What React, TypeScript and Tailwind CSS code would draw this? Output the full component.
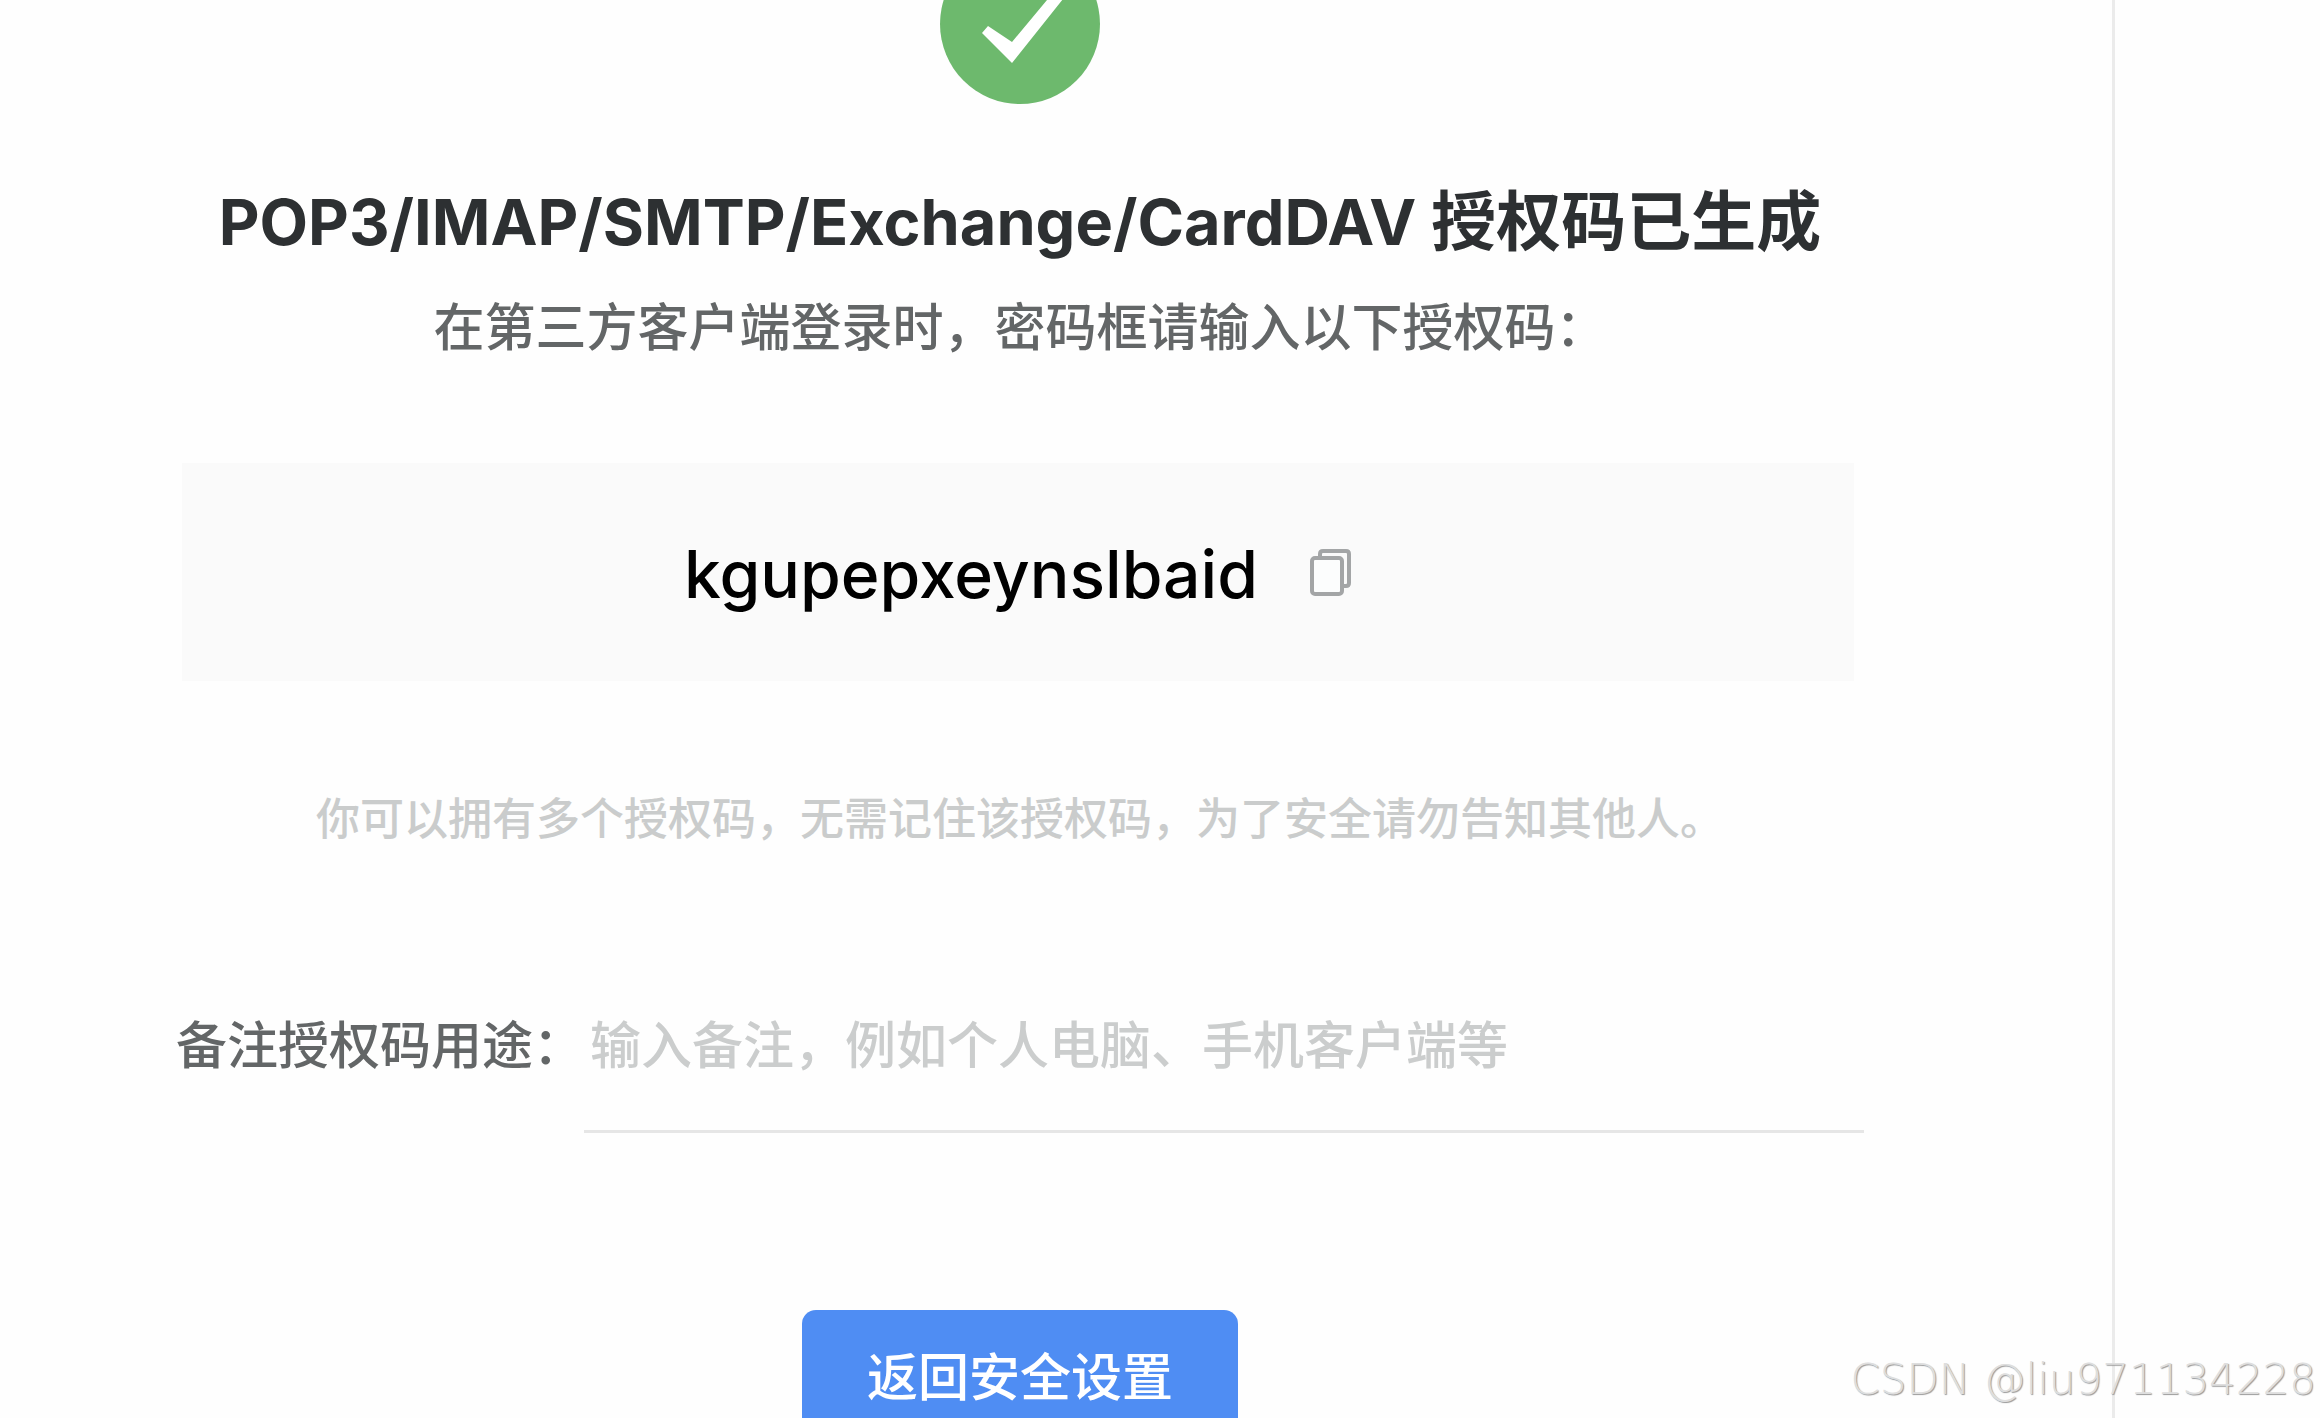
const cjk = 'font-["Noto_Sans_CJK_SC",sans-serif]';
const latin = 'font-[Inter,"Noto_Sans_CJK_SC",sans-serif]';

function SuccessMark() {
  return (
    <svg viewBox="0 0 160 160" className="block size-40" role="img" aria-label="成功">
      <circle cx="80" cy="80" r="80" fill="#6db96d" />
      <path d="M42 89 L48 82 L72 98 L112 50 L127 50 L72 119 Z" fill="#fff" />
    </svg>
  );
}

function CopyIcon() {
  return (
    <svg viewBox="0 0 42 48" className="block h-12 w-[42px]" fill="none" stroke="#a3a5a6" strokeWidth="4" strokeLinejoin="round">
      <path d="M10 9 V6 Q10 3 13 3 H36 Q39 3 39 6 V35 Q39 38 36 38 H33" />
      <rect x="2" y="10" width="30" height="36" rx="3" fill="#fcfdfd" />
    </svg>
  );
}

export default function App() {
  return (
    <div className={`relative flex h-screen overflow-hidden bg-[#fefefe] text-[51px] leading-[72px] font-medium text-[#636667] ${cjk}`}>
      <main className="flex flex-1 flex-col items-center border-r-3 border-[#ebebeb] pr-[248px] pl-44">
        <div className="-mt-14 shrink-0">
          <SuccessMark />
        </div>
        <h1 className={`mt-[70px] h-24 whitespace-nowrap text-[63px] leading-24 font-bold text-[#2d3032] ${latin}`}>
          POP3/IMAP/SMTP/Exchange/CardDAV <span className="text-[65px]">授权码已生成</span>
        </h1>
        <p className="mt-[18px] whitespace-nowrap">在第三方客户端登录时，密码框请输入以下授权码：</p>

        <div className="mt-[103px] flex w-full pr-2.5 pl-1.5">
          <div className="flex h-[218px] flex-1 items-center justify-center gap-[52px] bg-[#fafafa]">
            <span className={`pt-1 text-[66px] text-black ${latin}`}>kgupepxeynslbaid</span>
            <button type="button" aria-label="复制授权码">
              <CopyIcon />
            </button>
          </div>
        </div>

        <p className="mt-[99px] whitespace-nowrap text-[44px] text-[#cacccc]">
          你可以拥有多个授权码，无需记住该授权码，为了安全请勿告知其他人。
        </p>

        <form className="mt-[126px] flex w-full items-start">
          <label htmlFor="note" className="shrink-0 pt-7">
            备注授权码用途：
          </label>
          <input
            id="note"
            type="text"
            placeholder="输入备注，例如个人电脑、手机客户端等"
            className="h-[155px] min-w-0 flex-1 border-b-3 border-[#e6e6e6] bg-transparent px-1.5 pb-6 outline-none placeholder:text-[#cbcdcd]"
          />
        </form>

        <button type="button" className="mt-[177px] h-33 shrink-0 rounded-[14px] bg-[#4f8df3] px-[65px] pb-1 text-white">
          返回安全设置
        </button>
      </main>
      <aside className="w-[205px] shrink-0" />
      <div className='absolute right-1 bottom-2 whitespace-nowrap font-["DejaVu_Sans"] text-[42px] leading-[60px] font-extralight text-[#dedede] [text-shadow:1px_1px_1px_#999]'>
        CSDN @liu971134228
      </div>
    </div>
  );
}
